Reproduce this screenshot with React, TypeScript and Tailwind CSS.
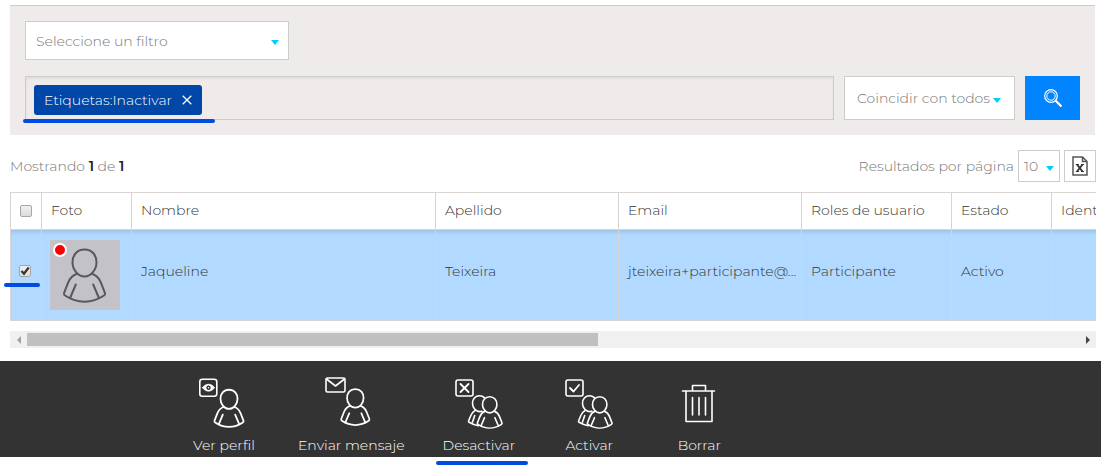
import React, { useEffect, useRef, useState } from 'react';

interface Column {
  label: string;
  width: string;
}

const columns: Column[] = [
  { label: 'Foto', width: 'w-[90px]' },
  { label: 'Nombre', width: 'w-[304px]' },
  { label: 'Apellido', width: 'w-[183px]' },
  { label: 'Email', width: 'w-[183px]' },
  { label: 'Roles de usuario', width: 'w-[150px]' },
  { label: 'Estado', width: 'w-[100px]' },
  { label: 'Identificador', width: 'w-[959px]' },
];

const PersonShape = () => (
  <>
    <path d="M34.5 9.5c7.6 0 12 5.8 12 12.8 0 7.4-5.4 14.2-12 14.2s-12-6.8-12-14.2c0-7 4.4-12.8 12-12.8z" />
    <path d="M27 33.8c-4.4 1.4-7.2 4.6-8.9 8.9l-4 10.2c-.4 1.2-.1 2 .9 2.6 12.2 8.2 26.8 8.2 39 0 1-.6 1.3-1.4.9-2.6l-4-10.2c-1.7-4.3-4.5-7.5-8.9-8.9" />
    <path d="M25.8 44.5L20.3 57.5M43.2 44.5l5.5 13" />
  </>
);

const ActionIcon: React.FC<{ children: React.ReactNode }> = ({ children }) => (
  <svg width="52" height="52" viewBox="0 0 52 52" fill="none" stroke="#fff" strokeWidth="1.6" strokeLinecap="round" strokeLinejoin="round" aria-hidden="true">
    {children}
  </svg>
);

const PeopleShape = () => (
  <>
    <path d="M31.3 20.6c-1.2-1.2-2.7-1.8-4.600-1.800-4.600 0-7.200 3.400-7.200 7.400 0 4.400 3.200 8.400 7.400 8.400.8 0 1.400-.1 2-.4" />
    <path d="M22.200 33.400c-2 .9-3.200 2.500-4.100 4.600l-2.500 5.700c-.3.700-.1 1.200.5 1.600 2.600 1.600 5.600 2.800 9.200 3.300M21.700 38.500l-2.200 6.500" />
    <g transform="translate(16 14) scale(.6)" strokeWidth="2.700">
      <PersonShape />
    </g>
  </>
);

const actions = [
  {
    label: 'Ver perfil',
    icon: (
      <ActionIcon>
        <rect x="1.800" y="2.200" width="17" height="17" rx="2.500" />
        <path d="M4.500 10.700c3.200-4.600 8.800-4.600 12 0-3.200 4.600-8.800 4.600-12 0z" fill="#fff" strokeWidth=".8" />
        <circle cx="10.500" cy="10.700" r="2.200" fill="#333" stroke="none" />
        <circle cx="10.500" cy="10.700" r=".8" fill="#fff" stroke="none" />
        <g transform="translate(6.500 6) scale(.71)" strokeWidth="2.500">
          <PersonShape />
        </g>
      </ActionIcon>
    ),
  },
  {
    label: 'Enviar mensaje',
    icon: (
      <ActionIcon>
        <rect x="1" y="1" width="19" height="14" rx="1.500" />
        <path d="M1.500 2l9 7 9-7" />
        <g transform="translate(6.500 5.500) scale(.69)" strokeWidth="2.500">
          <PersonShape />
        </g>
      </ActionIcon>
    ),
  },
  {
    label: 'Desactivar',
    icon: (
      <ActionIcon>
        <rect x="3" y="3" width="17" height="16" rx="2" />
        <path d="M7.500 7l8 8M15.500 7l-8 8" strokeWidth="1.800" />
        <PeopleShape />
      </ActionIcon>
    ),
  },
  {
    label: 'Activar',
    icon: (
      <ActionIcon>
        <rect x="3" y="3" width="17" height="16" rx="2" />
        <path d="M7 11l3.500 3.500L16 8" strokeWidth="1.800" />
        <PeopleShape />
      </ActionIcon>
    ),
  },
  {
    label: 'Borrar',
    icon: (
      <ActionIcon>
        <path d="M9.500 14h32M19.500 14V8.500h13V14M13 14v30.500h26V14M19.500 20.500v17.500M26 20.500v17.500M32.500 20.500v17.500" />
      </ActionIcon>
    ),
  },
];

const Caret: React.FC<{ className: string }> = ({ className }) => (
  <svg width="8" height="5" viewBox="0 0 8 5" className={`pointer-events-none absolute ${className}`} aria-hidden="true">
    <path d="M0 0h8L4 5z" fill="#00cfff" />
  </svg>
);

const Tick: React.FC<{ label: string; checked: boolean; onChange: (v: boolean) => void }> = ({ label, checked, onChange }) => (
  <span className="relative block h-3 w-3">
    <input
      type="checkbox"
      aria-label={label}
      checked={checked}
      onChange={e => onChange(e.target.checked)}
      className="block h-3 w-3 appearance-none rounded-xs border border-[#a6a6a6] bg-linear-to-b from-[#f0f0f0] to-[#dcdcdc]"
    />
    {checked && (
      <svg viewBox="0 0 12 12" className="pointer-events-none absolute inset-0" fill="none" stroke="#333" strokeWidth="2.200" aria-hidden="true">
        <path d="M2.500 6l2.500 2.700L9.700 2.500" />
      </svg>
    )}
  </span>
);

const App: React.FC = () => {
  const [tags, setTags] = useState(['Etiquetas:Inactivar']);
  const [selected, setSelected] = useState(true);
  const [all, setAll] = useState(false);
  const [thumb, setThumb] = useState(100);
  const viewport = useRef<HTMLDivElement>(null);

  useEffect(() => {
    const el = viewport.current;
    if (el) setThumb((el.clientWidth / el.scrollWidth) * 100);
  }, []);

  const scroll = (dx: number) => viewport.current?.scrollBy({ left: dx });

  return (
    <div className="bg-white pt-[5px] pb-2 font-['Montserrat','Inter',sans-serif] text-sm leading-5 font-light text-[#333]">
      <main className="ml-2.5 mr-[5px]">
        <section className="mr-px border-t border-[#ccc] bg-[#efebeb] px-[15px] pt-[15px] pb-[15px]">
          <div className="relative w-[264px]">
            <select aria-label="Filtro" className="block h-[39px] w-full appearance-none border border-[#ccc] bg-white px-2.5 text-[#777]">
              <option>Seleccione un filtro</option>
            </select>
            <Caret className="top-[19px] right-2.5" />
          </div>

          <div className="mt-4 flex gap-2.5">
            <div className="relative flex h-11 min-w-0 flex-1 items-center gap-2 border border-[#ccc] px-2 shadow-[inset_0_2px_3px_rgba(0,0,0,0.06)]">
              {tags.map(tag => (
                <span key={tag} className="mt-1 flex h-[30px] items-center gap-2.5 rounded-[3px] bg-[#0047a8] px-2.5 text-white">
                  {tag}
                  <button aria-label={`Quitar ${tag}`} onClick={() => setTags(tags.filter(t => t !== tag))}>
                    <svg width="10" height="10" viewBox="0 0 10 10" stroke="#fff" strokeWidth="1.300" aria-hidden="true">
                      <path d="M.7.7l8.600 8.600M9.300.7L.7 9.300" />
                    </svg>
                  </button>
                </span>
              ))}
              <input type="text" aria-label="Buscar" className="h-full min-w-0 flex-1 bg-transparent outline-none" />
              <span className="absolute top-[42px] -left-[3px] h-1 w-[192px] rounded-full bg-[#004be0]" />
            </div>
            <div className="relative w-[171px]">
              <select aria-label="Coincidencia" className="block h-11 w-full appearance-none border border-[#ccc] bg-white pl-3 text-[#777]">
                <option>Coincidir con todos</option>
              </select>
              <Caret className="top-[22px] right-3.5" />
            </div>
            <button aria-label="Buscar" className="flex h-11 w-[55px] items-center justify-center bg-[#0084ff]">
              <svg width="18" height="18" viewBox="0 0 18 18" fill="none" stroke="#fff" aria-hidden="true">
                <circle cx="7" cy="7" r="6.300" strokeWidth="1.200" />
                <circle cx="7" cy="7" r="4.200" strokeWidth="1" />
                <path d="M11.500 11.500l6 6" strokeWidth="2.200" />
              </svg>
            </button>
          </div>
        </section>

        <div className="flex items-center gap-1 pt-[15px] pb-2.5 text-[#777]">
          <p className="flex-1">
            Mostrando <b className="font-semibold text-[#222]">1</b> de <b className="font-semibold text-[#222]">1</b>
          </p>
          <label htmlFor="page-size">Resultados por página</label>
          <div className="relative w-[42px]">
            <select id="page-size" className="block h-8 w-full appearance-none border border-[#ccc] bg-white pl-[5px]">
              <option>10</option>
            </select>
            <Caret className="top-4 right-1.5" />
          </div>
          <button aria-label="Exportar a Excel" className="flex h-8 w-8 items-center justify-center border border-[#ccc] bg-white">
            <svg width="16" height="20" viewBox="0 0 16 20" fill="none" stroke="#555" strokeWidth="1.500" aria-hidden="true">
              <path d="M1 1h9.500L15 5.500V19H1zM10.500 1v4.500H15" />
              <path d="M5 8.500l5.500 7M10.500 8.500L5 15.500" stroke="#333" strokeWidth="1.900" />
              <path d="M3.800 8.500h3M9 8.500h3M3.800 15.500h3M9 15.500h3" stroke="#333" strokeWidth="1.200" />
            </svg>
          </button>
        </div>

        <div className="relative">
          <div ref={viewport} className="overflow-hidden">
            <table className="w-[2000px] table-fixed border-collapse text-left">
              <thead>
                <tr className="h-[37px]">
                  <th className="w-[31px] border border-[#d8d4d4] pl-[9px]">
                    <Tick label="Seleccionar todos" checked={all} onChange={setAll} />
                  </th>
                  {columns.map(col => (
                    <th key={col.label} className={`border border-[#d8d4d4] px-[9px] pb-0.5 font-light ${col.width}`}>{col.label}</th>
                  ))}
                </tr>
              </thead>
              <tbody>
                <tr className={`h-[91px] ${selected ? 'bg-[#b2d9ff]' : 'bg-white'} shadow-[inset_0_4px_4px_-2px_rgba(0,0,0,0.12)]`}>
                  <td className="border border-[#d8d4d4] pb-2 pl-2">
                    <Tick label="Seleccionar Jaqueline Teixeira" checked={selected} onChange={setSelected} />
                  </td>
                  <td className="border border-[#d8d4d4] px-2">
                    <div className="relative h-[70px] w-[70px] bg-[#c2c2c8]">
                      <svg width="70" height="70" viewBox="0 0 70 70" fill="none" stroke="#595959" strokeWidth="2" strokeLinecap="round" strokeLinejoin="round" aria-hidden="true">
                        <PersonShape />
                      </svg>
                      <span className="absolute top-[3px] left-[3px] h-3.5 w-3.5 rounded-full border-2 border-white bg-[#f00]" />
                    </div>
                  </td>
                  <td className="border border-[#d8d4d4] px-[9px] pb-2">Jaqueline</td>
                  <td className="border border-[#d8d4d4] px-[9px] pb-2">Teixeira</td>
                  <td className="border border-[#d8d4d4] px-[9px] pb-2 whitespace-nowrap">jteixeira+participante@...</td>
                  <td className="border border-[#d8d4d4] px-[9px] pb-2">Participante</td>
                  <td className="border border-[#d8d4d4] px-[9px] pb-2">Activo</td>
                  <td className="border border-[#d8d4d4] px-[9px] pb-2" />
                </tr>
              </tbody>
            </table>
          </div>
          <span className="absolute bottom-[34px] -left-1.5 h-1 w-9 rounded-full bg-[#004be0]" />
        </div>

        <div className="mt-2.5 flex h-[17px] items-center bg-[#f0f0f0]">
          <button aria-label="Desplazar a la izquierda" onClick={() => scroll(-100)} className="flex h-full w-[17px] items-center justify-center">
            <svg width="4" height="8" viewBox="0 0 4 8" aria-hidden="true"><path d="M4 0v8L0 4z" fill="#a0a0a0" /></svg>
          </button>
          <div className="flex-1">
            <div className="h-[13px] bg-[#c0c0c0]" style={{ width: `${thumb}%` }} />
          </div>
          <button aria-label="Desplazar a la derecha" onClick={() => scroll(100)} className="flex h-full w-[17px] items-center justify-center">
            <svg width="4" height="8" viewBox="0 0 4 8" aria-hidden="true"><path d="M0 0v8l4-4z" fill="#444" /></svg>
          </button>
        </div>
      </main>

      <footer className="mt-[13px] flex h-24 bg-[#333] pt-4 pl-[169px] text-white">
        {actions.map(({ label, icon }) => (
          <button key={label} className="relative flex min-w-[110px] flex-col items-center gap-1.5 px-[19px] whitespace-nowrap">
            {icon}
            {label}
            {label === 'Desactivar' && <span className="absolute top-[84px] left-3 h-1 w-[92px] rounded-full bg-[#004be0]" />}
          </button>
        ))}
      </footer>
    </div>
  );
};

export default App;
